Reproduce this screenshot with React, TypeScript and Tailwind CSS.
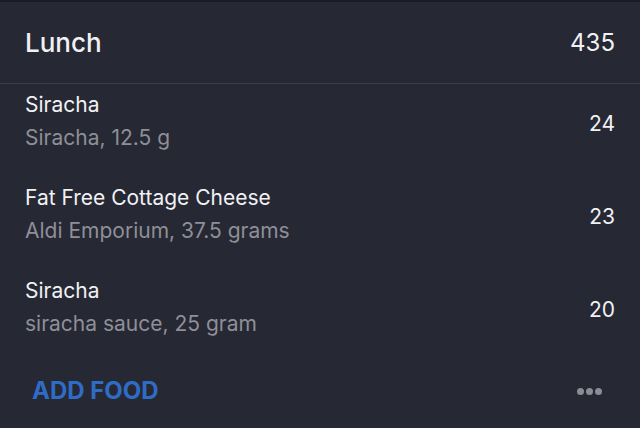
const items = [
  { name: "Siracha", detail: "Siracha, 12.5 g", cal: 24 },
  { name: "Fat Free Cottage Cheese", detail: "Aldi Emporium, 37.5 grams", cal: 23 },
  { name: "Siracha", detail: "siracha sauce, 25 gram", cal: 20 },
];

export default function App() {
  return (
    <div
      className="flex h-[428px] w-[640px] flex-col overflow-hidden border-t-2 border-[#1a1b24] bg-[#262833] text-[#f1f1f4]"
      style={{ fontFamily: "Inter, 'Liberation Sans', sans-serif" }}
    >
      <header className="flex h-[82px] shrink-0 items-center justify-between border-b border-[#3b3d49] px-[25px]">
        <h1 className="text-[26px] font-medium">Lunch</h1>
        <span className="text-[24px]">435</span>
      </header>

      <ul>
        {items.map((item, i) => (
          <li
            key={i}
            className="flex h-[93px] items-start justify-between px-[25px] pt-[8px]"
          >
            <div>
              <p className="text-[21px] leading-[26px]">{item.name}</p>
              <p className="mt-[7px] text-[21px] leading-[26px] text-[#8e8f98]">
                {item.detail}
              </p>
            </div>
            <span className="mt-[19px] text-[21px] leading-[26px]">{item.cal}</span>
          </li>
        ))}
      </ul>

      <footer className="flex items-center justify-between pl-[32px] pr-[38px] pt-[10px]">
        <button className="text-[24px] font-bold text-[#2f6cc6]">ADD FOOD</button>
        <div className="flex gap-[2px]">
          <span className="h-[7px] w-[7px] rounded-full bg-[#8b8c95]" />
          <span className="h-[7px] w-[7px] rounded-full bg-[#8b8c95]" />
          <span className="h-[7px] w-[7px] rounded-full bg-[#8b8c95]" />
        </div>
      </footer>
    </div>
  );
}
